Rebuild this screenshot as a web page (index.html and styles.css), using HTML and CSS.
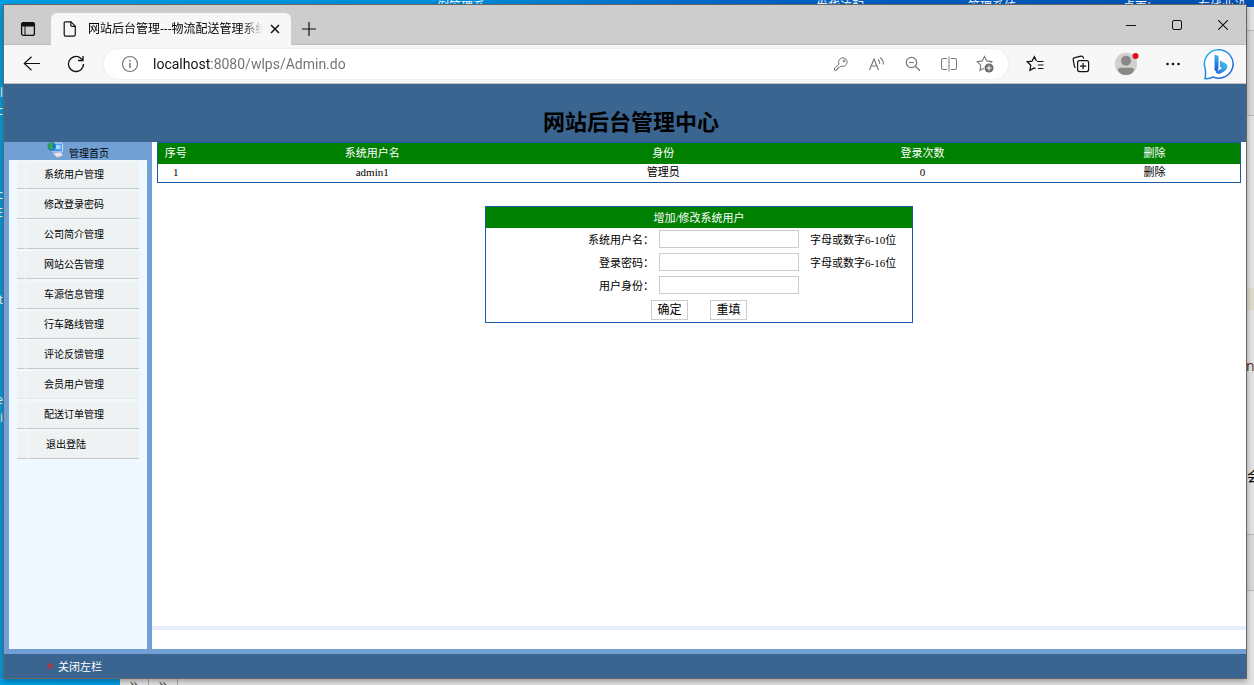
FILE: index.html
```
<!DOCTYPE html>
<html lang="zh-CN">
<head>
  <meta charset="UTF-8">
  <title>网站后台管理---物流配送管理系统</title>
  <link rel="stylesheet" href="styles.css">
</head>
<body>
  <!-- 桌面 -->
  <div class="desktop" aria-hidden="true">
    <span class="shortcut s1">例管理系</span>
    <span class="shortcut s2">发货流配</span>
    <span class="shortcut s3">管理系统</span>
    <span class="shortcut s4">桌面(</span>
    <span class="shortcut s5">在线业设</span>
    <span class="shortcut s6">cl</span>
    <span class="shortcut s7">nc</span>
    <span class="shortcut s8">c</span>
    <span class="shortcut s9">E</span>
    <span class="shortcut s10">t</span>
    <span class="shortcut s11">e</span>
    <span class="shortcut s12">ti</span>
    <div class="back-window">
      <i class="back-bar bar-top"></i>
      <i class="back-bar bar-note"></i>
      <i class="back-bar bar-bottom"></i>
      <span class="back-text t1">nc</span>
      <span class="back-text t2">会</span>
      <div class="back-tabs"><span>»</span><span>»</span></div>
    </div>
  </div>

  <div class="window">
    <div class="tab-strip">
      <button class="tab-actions" aria-label="标签操作">
        <svg width="16" height="16" viewBox="0 0 16 16" fill="none" stroke="#111">
          <rect x="1.6" y="1.6" width="12.8" height="12.8" rx="2" stroke-width="1.3"/>
          <path d="M1.5 3.5a2 2 0 0 1 2-2h9a2 2 0 0 1 2 2V5h-13z" fill="#111"/>
          <path d="M5 5v9"/>
        </svg>
      </button>
      <div class="tab">
        <svg width="14" height="16" viewBox="0 0 14 16" fill="none" stroke="#111" stroke-width="1.2">
          <path d="M2.5.8H8L12.3 5.2v8.3a1.6 1.6 0 0 1-1.6 1.6H2.8a1.6 1.6 0 0 1-1.6-1.6V2.1A1.3 1.3 0 0 1 2.5.8z"/>
          <path d="M7.8.8v3.4a1.2 1.2 0 0 0 1.2 1.2h3.3"/>
        </svg>
        <span class="tab-title">网站后台管理---物流配送管理系统</span>
        <button class="tab-close" aria-label="关闭标签页">
          <svg width="10" height="10" viewBox="0 0 10 10" stroke="#111" stroke-width="1.5"><path d="M1 1l8 8M9 1L1 9"/></svg>
        </button>
      </div>
      <button class="new-tab" aria-label="新建标签页">
        <svg width="14" height="14" viewBox="0 0 14 14" stroke="#111" stroke-width="1.2"><path d="M7 0v14M0 7h14"/></svg>
      </button>
      <div class="window-controls">
        <button aria-label="最小化"><svg width="10" height="10" viewBox="0 0 10 10" stroke="#111"><path d="M0 5.5h10"/></svg></button>
        <button aria-label="最大化"><svg width="10" height="10" viewBox="0 0 10 10" fill="none" stroke="#111"><rect x=".5" y=".5" width="9" height="9" rx="1.5"/></svg></button>
        <button aria-label="关闭"><svg width="10" height="10" viewBox="0 0 10 10" stroke="#111" stroke-width="1.1"><path d="M0 0l10 10M10 0L0 10"/></svg></button>
      </div>
    </div>

    <div class="toolbar">
      <button aria-label="后退">
        <svg width="18" height="16" viewBox="0 0 18 16" fill="none" stroke="#111" stroke-width="1.2"><path d="M17 7.5H1.5M8.5.8L1.3 7.5l7.2 6.7"/></svg>
      </button>
      <button aria-label="刷新">
        <svg width="18" height="18" viewBox="0 0 18 18" fill="none" stroke="#111" stroke-width="1.3"><path d="M16.5 9A7.5 7.5 0 1 1 14 3.4L15.8 5"/><path d="M16 1v4.500h-5"/></svg>
      </button>
      <div class="address">
        <svg width="18" height="18" viewBox="0 0 18 18" fill="none" stroke="#767676" stroke-width="1.2"><circle cx="9" cy="9" r="7.5"/><path d="M9 8v5M9 5v1.6" stroke-width="1.5"/></svg>
        <input class="url" type="text" aria-label="地址" value="localhost:8080/wlps/Admin.do">
        <button aria-label="密码">
          <svg width="16" height="16" viewBox="0 0 16 16" fill="none" stroke="#767676"><path d="M6.1 8.2A4.3 4.3 0 1 1 8 10L6.6 11.3H5.2v1.5H3.8v1.4H1.5v-2.2z"/><circle cx="11" cy="5" r="1"/></svg>
        </button>
        <button aria-label="大声朗读">
          <svg width="18" height="16" viewBox="0 0 18 16" fill="none" stroke="#767676" stroke-width="1.1"><path d="M1.5 14L6 3l4.500 11M3.2 10h5.6M10 3.5q2 1.800 1.800 4.500M12.3 1.5q3.500 3 3 7"/></svg>
        </button>
        <button aria-label="缩小">
          <svg width="16" height="16" viewBox="0 0 16 16" fill="none" stroke="#767676" stroke-width="1.2"><circle cx="6.5" cy="6.5" r="5.2"/><path d="M10.3 10.3l4.7 4.5M4 6.5h5"/></svg>
        </button>
        <button aria-label="分屏">
          <svg width="18" height="16" viewBox="0 0 18 16" fill="none" stroke="#767676"><path d="M7 2.5H3a1.5 1.5 0 0 0-1.5 1.5v8A1.5 1.5 0 0 0 3 13.5h4M11 2.5h4A1.5 1.5 0 0 1 16.5 4v8a1.5 1.5 0 0 1-1.5 1.5h-4M9 .5v15"/></svg>
        </button>
        <button aria-label="收藏此页">
          <svg width="18" height="18" viewBox="0 0 18 18" fill="none" stroke="#767676" stroke-width="1.1"><path d="M7.8 13.3L4 15.4l.8-5L1.2 6.7l5-.8L8.500 1.4l2.300 4.500 5 .8-1.200 1.200"/><circle cx="13" cy="13" r="4.5" fill="#6b6b6b" stroke="none"/><path d="M13 10.5v5M10.5 13h5" stroke="#fff"/></svg>
        </button>
      </div>
      <button aria-label="收藏夹">
        <svg width="18" height="18" viewBox="0 0 18 18" fill="none" stroke="#111" stroke-width="1.2"><path d="M10.4 5.9L8.400 1.700 6.100 6.100 1.200 6.800l3.600 3.500-.9 5L8.200 13l1.300.6M11 6.500h6.500M12 10h5.500M12 13.500h5.500"/></svg>
      </button>
      <button aria-label="集锦">
        <svg width="18" height="18" viewBox="0 0 18 18" fill="none" stroke="#111" stroke-width="1.2"><rect x="5.6" y="5.6" width="11" height="11" rx="2"/><path d="M11.1 8v6.2M8 11.1h6.2M3.6 12.6l-.8-.6a2 2 0 0 1-.5-1.2L1.2 5a2 2 0 0 1 1.6-2.3L9 1.2a2 2 0 0 1 2.4 1.500l.2.9"/></svg>
      </button>
      <button aria-label="个人资料">
        <svg width="26" height="24" viewBox="0 0 26 24"><circle cx="12" cy="12" r="11.2" fill="#d2d0ce"/><circle cx="12" cy="8.8" r="5" fill="#8a8886"/><path d="M4 18.5a2.5 2.5 0 0 1 2.5-2.8h11a2.5 2.5 0 0 1 2.5 2.8Q17.5 23 12 23T4 18.5z" fill="#8a8886"/><circle cx="21.5" cy="4" r="3" fill="#e00b1c"/></svg>
      </button>
      <button aria-label="设置及其他">
        <svg width="16" height="4" viewBox="0 0 16 4" fill="#111"><circle cx="2.5" cy="2" r="1.3"/><circle cx="8" cy="2" r="1.3"/><circle cx="13.5" cy="2" r="1.3"/></svg>
      </button>
      <button aria-label="必应">
        <svg width="32" height="32" viewBox="0 0 32 32">
          <defs>
            <linearGradient id="ring" x1="0" y1="0" x2="1" y2="1"><stop offset="0" stop-color="#27b5ee"/><stop offset="1" stop-color="#1b54d8"/></linearGradient>
            <linearGradient id="stem" x1="0" y1="0" x2="0" y2="1"><stop offset="0" stop-color="#38b6f2"/><stop offset="1" stop-color="#1b4fd6"/></linearGradient>
            <linearGradient id="bowl" x1="0" y1="1" x2="1" y2="0"><stop offset="0" stop-color="#1c62dc"/><stop offset="1" stop-color="#4cd6f5"/></linearGradient>
          </defs>
          <path d="M16.500 1.800a14.200 14.200 0 1 1-6.300 27.200Q6 31 2 30.600q1-4 .3-9.600A14.200 14.200 0 0 1 16.500 1.800z" fill="#fff" stroke="url(#ring)" stroke-width="1.5"/>
          <path d="M11.500 6.500l4 1.500v12l-1.300 4.500-2.700-2.500z" fill="url(#stem)"/>
          <path d="M17 12.500l5.500 2.700q2.500 1.500 1.800 4.300-.8 2.500-3.300 4l-3.500 2q-3 1-4.800-1.300l6.300-4-2-1.500z" fill="url(#bowl)"/>
        </svg>
      </button>
    </div>

    <div class="page">
      <header class="page-header"><h1>网站后台管理中心</h1></header>
      <div class="page-body">
        <nav class="sidebar">
          <a class="side-home" href="#">
            <svg width="18" height="16" viewBox="0 0 18 16">
              <rect x="5" y="1" width="10.500" height="9" rx="1.5" fill="#4f9fee" stroke="#d3dcf2"/>
              <path d="M7.500 3h6v4h-6z" fill="#9bdcff"/>
              <path d="M6 11.500l7.500-1.500 2.500 3.500-6 2z" fill="#e6e4ef" stroke="#a9a4c4" stroke-width=".5"/>
              <circle cx="4.800" cy="4.500" r="4.200" fill="#1f6fc9"/>
              <path d="M1.500 2q3.500-3 5 0L5 4l1.500 2L4.500 8.200 1.500 5.500z" fill="#2bb044"/>
            </svg>
            管理首页
          </a>
          <ul class="menu">
            <li><a href="#">系统用户管理</a></li>
            <li><a href="#">修改登录密码</a></li>
            <li><a href="#">公司简介管理</a></li>
            <li><a href="#">网站公告管理</a></li>
            <li><a href="#">车源信息管理</a></li>
            <li><a href="#">行车路线管理</a></li>
            <li><a href="#">评论反馈管理</a></li>
            <li class="plain"><a href="#">会员用户管理</a></li>
            <li><a href="#">配送订单管理</a></li>
            <li class="logout"><a href="#">退出登陆</a></li>
          </ul>
        </nav>

        <main class="content">
          <div class="content-main">
            <table class="user-table">
              <colgroup><col class="c-no"><col class="c-name"><col class="c-role"><col class="c-count"><col class="c-del"></colgroup>
              <thead>
                <tr><th>序号</th><th>系统用户名</th><th>身份</th><th>登录次数</th><th>删除</th></tr>
              </thead>
              <tbody>
                <tr><td>1</td><td>admin1</td><td>管理员</td><td>0</td><td><a href="#">删除</a></td></tr>
              </tbody>
            </table>

            <form class="user-form">
              <h2>增加/修改系统用户</h2>
              <div class="field">
                <label for="username">系统用户名：</label>
                <input type="text" id="username">
                <span>字母或数字6-10位</span>
              </div>
              <div class="field">
                <label for="password">登录密码：</label>
                <input type="password" id="password">
                <span>字母或数字6-16位</span>
              </div>
              <div class="field">
                <label for="role">用户身份：</label>
                <input type="text" id="role">
              </div>
              <div class="form-buttons">
                <button type="submit">确定</button>
                <button type="reset">重填</button>
              </div>
            </form>
          </div>
          <div class="content-foot"></div>
        </main>
      </div>
      <footer class="page-footer">
        <button class="close-left">
          <svg width="6" height="6" viewBox="0 0 6 6" stroke="#d8242c" stroke-width="1.2"><path d="M.5.5l5 5M5.5.5l-5 5"/></svg>
          关闭左栏
        </button>
      </footer>
    </div>
  </div>
</body>
</html>
```
FILE: styles.css
```
* {
  box-sizing: border-box;
}
body {
  margin: 0;
  height: 100vh;
  padding: 4px 7px 6px 3px;
  display: flex;
  overflow: hidden;
  background: #0093dc;
  font-family: "Liberation Serif", "Noto Sans CJK SC", sans-serif;
  font-size: 11px;
  color: #000;
}
button {
  margin: 0;
  padding: 0;
  border: 0;
  background: none;
  font: inherit;
  color: inherit;
}
a {
  color: inherit;
  text-decoration: none;
}
svg {
  flex: none;
  display: block;
}

/* 桌面 */
.desktop {
  position: absolute;
  inset: 0;
  overflow: hidden;
  background: linear-gradient(to right, #00a0e6, #0091df 35%, #0066c8 60%, #0050b4);
}
.shortcut {
  position: absolute;
  font: 12px/14px "Open Sans", "Noto Sans CJK SC", sans-serif;
  color: #fff;
  white-space: nowrap;
}
.s1 { left: 437px; top: 0; }
.s2 { left: 816px; top: 0; }
.s3 { left: 968px; top: 0; }
.s4 { left: 1123px; top: 0; }
.s5 { left: 1198px; top: 0; }
.s6 { right: 1251px; top: 86px; }
.s7 { right: 1251px; top: 104px; }
.s8 { right: 1251px; top: 188px; }
.s9 { right: 1251px; top: 206px; }
.s10 { right: 1251px; top: 293px; }
.s11 { right: 1251px; top: 393px; }
.s12 { right: 1251px; top: 411px; }
.back-window {
  position: absolute;
  left: 120px;
  top: 7px;
  right: 0;
  bottom: 0;
  background: #e3e3e3;
}
.back-bar {
  position: absolute;
  left: 0;
  right: 0;
  background: #dadada;
  border: solid #bbb;
  border-width: 1px 0;
}
.bar-top { top: 23px; height: 86px; }
.bar-note { top: 281px; height: 22px; background: #dedccb; border: 0; }
.bar-bottom { top: 527px; height: 57px; }
.back-text {
  position: absolute;
  font: 14px/16px "Open Sans", "Noto Sans CJK SC", sans-serif;
}
.t1 { left: 1126px; top: 351px; color: #5a2c10; }
.t2 { left: 1127px; top: 461px; }
.back-tabs {
  position: absolute;
  left: 0;
  bottom: 0;
  display: flex;
  height: 7px;
  line-height: 12px;
  font-size: 18px;
  color: #555;
}
.back-tabs span {
  width: 29px;
  text-align: center;
  border-right: 1px solid #aaa;
  overflow: hidden;
}

/* 浏览器窗口 */
.window {
  position: relative;
  flex: 1;
  display: flex;
  flex-direction: column;
  border: 1px solid #666;
  box-shadow: 0 2px 6px rgba(0, 0, 0, 0.35);
  background: #fff;
}
.tab-strip {
  display: flex;
  height: 40px;
  background: #cdcdcd;
  border-bottom: 1px solid #bdbdbd;
}
.tab-strip button,
.toolbar button {
  display: flex;
  align-items: center;
  justify-content: center;
}
.tab-strip .tab-actions {
  width: 47px;
  padding-top: 8px;
}
.tab {
  display: flex;
  align-items: center;
  width: 240px;
  height: 32px;
  margin-top: 8px;
  padding: 0 8px 0 12px;
  border-radius: 6px 6px 0 0;
  background: #f7f7f7;
}
.tab-title {
  flex: 1;
  margin: 0 4px 0 11px;
  font: 12px/20px "Open Sans", "Noto Sans CJK SC", sans-serif;
  white-space: nowrap;
  overflow: hidden;
  -webkit-mask-image: linear-gradient(to right, #000 88%, transparent);
  mask-image: linear-gradient(to right, #000 88%, transparent);
}
.tab-strip .tab-close {
  width: 16px;
  height: 16px;
}
.tab-strip .new-tab {
  width: 36px;
  padding-top: 8px;
}
.window-controls {
  display: flex;
  margin-left: auto;
}
.window-controls button {
  width: 46px;
}
.toolbar {
  display: flex;
  align-items: center;
  height: 39px;
  padding: 0 4px 0 6px;
  background: #f7f7f7;
  border-bottom: 1px solid #bfbfbf;
}
.toolbar button {
  width: 46px;
  height: 32px;
}
.toolbar > button:nth-child(-n+2) {
  width: 44px;
}
.address {
  flex: 1;
  display: flex;
  align-items: center;
  height: 30px;
  margin: 0 4px 0 6px;
  padding: 0 5px 0 17px;
  border-radius: 15px;
  background: #fff;
  box-shadow: 0 0 3px rgba(0, 0, 0, 0.08);
}
.toolbar .address button {
  width: 36px;
}
.url {
  flex: 1;
  min-width: 0;
  margin-left: 14px;
  padding: 0;
  border: 0;
  outline: 0;
  font: 14px/20px Roboto, sans-serif;
  color: transparent;
  /* 主机名深色，路径灰色 */
  background: linear-gradient(to right, #111 57px, #707070 57px);
  -webkit-background-clip: text;
  background-clip: text;
}

/* 页面 */
.page {
  flex: 1;
  display: flex;
  flex-direction: column;
  min-height: 0;
}
.page-header {
  height: 58px;
  padding: 23px 0 0 12px;
  background: #3a6591;
  text-align: center;
}
.page-header h1 {
  margin: 0;
  font-size: 22px;
  line-height: 32px;
}
.page-body {
  flex: 1;
  display: flex;
  min-height: 0;
}
.sidebar {
  width: 148px;
  padding: 0 5px;
  background: #72a0d4;
  display: flex;
  flex-direction: column;
}
.side-home {
  display: flex;
  justify-content: center;
  gap: 4px;
  height: 18px;
  font-size: 10px;
  line-height: 24px;
}
.menu {
  flex: 1;
  display: flex;
  flex-direction: column;
  gap: 2px;
  margin: 0;
  padding: 1px 8px;
  background: #f0f8ff;
  list-style: none;
  font-size: 10px;
}
.menu li {
  display: flex;
  gap: 1px;
  height: 28px;
  line-height: 28px;
}
.menu li::before {
  content: "";
  width: 8px;
}
.menu li::before,
.menu a {
  background: #eef2f3;
  border-bottom: 1px solid #c8c8c8;
}
.menu a {
  flex: 1;
  padding-left: 18px;
}
.menu .plain::before,
.menu .plain a {
  border-color: #e6eaec;
}
.menu .logout::before {
  width: 10px;
}
.content {
  flex: 1;
  display: flex;
  flex-direction: column;
  background: #fff;
}
.content-main {
  flex: 1;
  padding: 0 5px;
}
.content-foot {
  height: 23px;
  border-top: 4px solid #e5eefa;
}
.user-table {
  width: 100%;
  table-layout: fixed;
  border-collapse: separate;
  border-spacing: 0;
  border: 1px solid #1c5aa8;
  text-align: center;
}
.c-no { width: 3.3%; }
.c-name { width: 33%; }
.c-role { width: 20.8%; }
.c-count { width: 27.1%; }
.c-del { width: 15.8%; }
.user-table th {
  height: 21px;
  padding: 0;
  background: #008000;
  color: #fff;
  font-weight: normal;
  line-height: 21px;
}
.user-table td {
  height: 18px;
  padding: 0;
  line-height: 16px;
  vertical-align: top;
}
.user-form {
  max-width: 428px;
  margin: 23px auto 0;
  border: 1px solid #1c5aa8;
}
.user-form h2 {
  margin: 0;
  height: 21px;
  background: #008000;
  color: #fff;
  font-size: 11px;
  font-weight: normal;
  line-height: 22px;
  text-align: center;
}
.field {
  display: grid;
  grid-template-columns: 168px 140px 1fr;
  column-gap: 5px;
  align-items: center;
  height: 23px;
  padding-bottom: 1px;
}
.field label {
  text-align: right;
}
.field span {
  padding-left: 6px;
}
.field input {
  height: 18px;
  padding: 0 2px;
  border: 1px solid #ccc;
  font: inherit;
}
.form-buttons {
  display: flex;
  gap: 22px;
  padding: 3px 0 2px 165px;
}
.form-buttons button {
  width: 37px;
  height: 20px;
  border: 1px solid #ccc;
  background: #fff;
  font-size: 12px;
  line-height: 18px;
}
.page-footer {
  height: 29px;
  border-top: 5px solid #72a0d4;
  background: #3a6591;
}
.close-left {
  display: flex;
  align-items: center;
  gap: 5px;
  height: 24px;
  margin-left: 43px;
  color: #fff;
}
```
